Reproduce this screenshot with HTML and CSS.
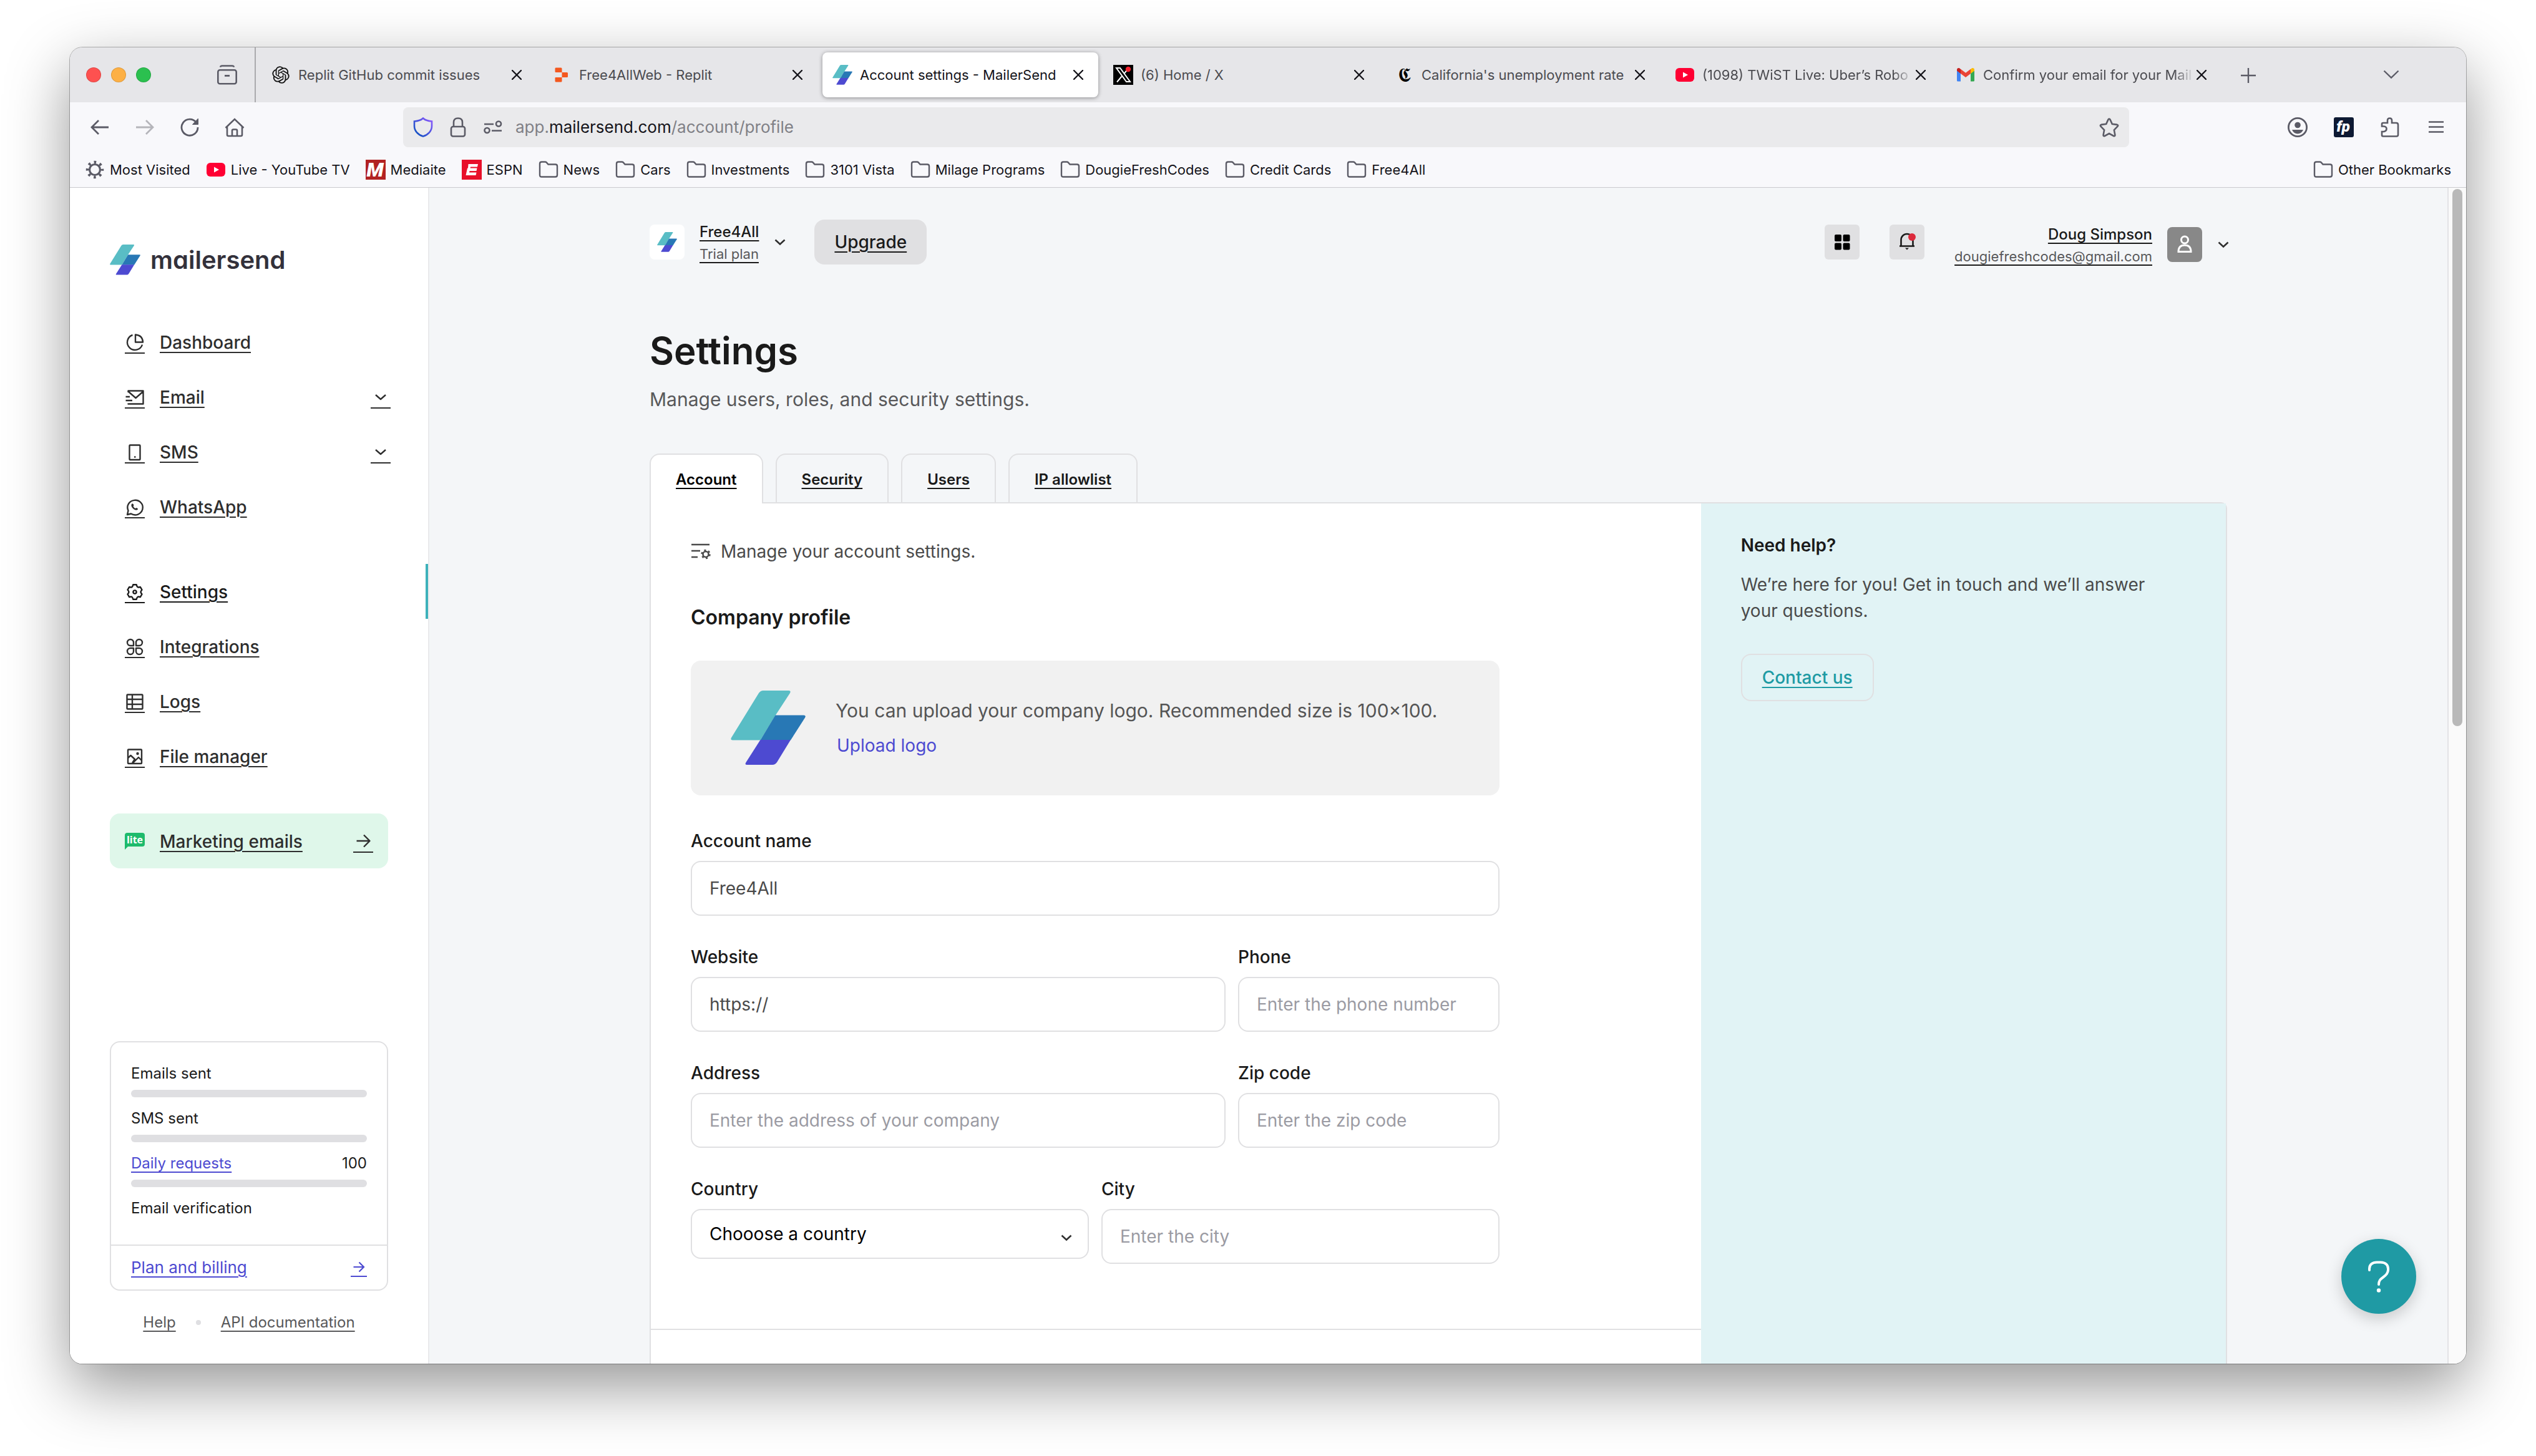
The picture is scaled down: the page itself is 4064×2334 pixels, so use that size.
FILE: index.html
```html
<!DOCTYPE html>
<html lang="en">
<head>
<meta charset="utf-8">
<title>Account settings - MailerSend</title>
<link rel="stylesheet" href="styles.css">
</head>
<body>
<svg class="sprite" aria-hidden="true">
  <symbol id="mark" viewBox="0 0 120 120">
    <path fill="#59bdc5" d="M52 0H93Q97 0 95 4L71.500 40L47.500 79.500H3Q-1 79.500 1 75.500L45 4Q48 0 52 0Z"/>
    <path fill="#2878b5" d="M71.500 39.500H117Q121 39.500 119 43.500L96 79.500H47.500Z"/>
    <path fill="#4d4ad1" d="M47.500 79H96L74 115Q71 119 67 119H26Q22 119 24.500 115Z"/>
  </symbol>
  <symbol id="close" viewBox="0 0 16 16"><path d="M1 1L15 15M15 1L1 15" fill="none" stroke="#15141a" stroke-width="2.400" stroke-linecap="round"/></symbol>
  <symbol id="folder" viewBox="0 0 32 32"><path d="M2 6.500Q2 3.500 5 3.500H10.500Q12 3.500 13 4.600L15.500 7.500H27Q30 7.500 30 10.500V24.500Q30 27.500 27 27.500H5Q2 27.500 2 24.500Z" fill="none" stroke="#5b5b66" stroke-width="2.400"/></symbol>
  <symbol id="youtube" viewBox="0 0 32 32"><rect x="1" y="5" width="30" height="22" rx="6" fill="#ff0033"/><path d="M13 11.500L21 16L13 20.500Z" fill="#fff"/></symbol>
  <symbol id="chevron" viewBox="0 0 20 20"><path d="M2.500 6.500L10 13.500L17.500 6.500" fill="none" stroke="currentColor" stroke-width="2.600"/></symbol>
</svg>

<div class="window">
  <header class="tabbar">
    <div class="lights"><span class="light red"></span><span class="light amber"></span><span class="light green"></span></div>
    <button class="iconbtn recent" aria-label="Recent browsing"><svg viewBox="0 0 32 32" class="i32"><path d="M5 3.500Q5.500 1.500 8 1.500H24Q26.500 1.500 27 3.500" fill="none" stroke="#5b5b66" stroke-width="2.600"/><rect x="1.300" y="8.300" width="29.400" height="22" rx="3" fill="none" stroke="#5b5b66" stroke-width="2.600"/><rect x="12" y="16" width="8" height="2.800" fill="#5b5b66"/></svg></button>
    <div class="tabs">
      <div class="tab"><svg class="i32" viewBox="-2 -2 28 28"><path d="M22.2819 9.8211a5.9847 5.9847 0 0 0-.5157-4.9108 6.0462 6.0462 0 0 0-6.5098-2.9A6.0651 6.0651 0 0 0 4.9807 4.1818a5.9847 5.9847 0 0 0-3.9977 2.9 6.0462 6.0462 0 0 0 .7427 7.0966 5.98 5.98 0 0 0 .511 4.9107 6.051 6.051 0 0 0 6.5146 2.9001A5.9847 5.9847 0 0 0 13.2599 24a6.0557 6.0557 0 0 0 5.7718-4.2058 5.9894 5.9894 0 0 0 3.9977-2.9001 6.0557 6.0557 0 0 0-.7475-7.0729zm-9.022 12.6081a4.4755 4.4755 0 0 1-2.8764-1.0408l.1419-.0804 4.7783-2.7582a.7948.7948 0 0 0 .3927-.6813v-6.7369l2.02 1.1686a.071.071 0 0 1 .038.052v5.5826a4.504 4.504 0 0 1-4.4945 4.4944zm-9.6607-4.1254a4.4708 4.4708 0 0 1-.5346-3.0137l.142.0852 4.783 2.7582a.7712.7712 0 0 0 .7806 0l5.8428-3.3685v2.3324a.0804.0804 0 0 1-.0332.0615L9.74 19.9502a4.4992 4.4992 0 0 1-6.1408-1.6464zM2.3408 7.8956a4.485 4.485 0 0 1 2.3655-1.9728V11.6a.7664.7664 0 0 0 .3879.6765l5.8144 3.3543-2.0201 1.1685a.0757.0757 0 0 1-.071 0l-4.8303-2.7865A4.504 4.504 0 0 1 2.3408 7.872zm16.5963 3.8558L13.1038 8.364 15.1192 7.2a.0757.0757 0 0 1 .071 0l4.8303 2.7913a4.4944 4.4944 0 0 1-.6765 8.1042v-5.6772a.79.79 0 0 0-.407-.667zm2.0107-3.0231l-.142-.0852-4.7735-2.7818a.7759.7759 0 0 0-.7854 0L9.409 9.2297V6.8974a.0662.0662 0 0 1 .0284-.0615l4.8303-2.7866a4.4992 4.4992 0 0 1 6.6802 4.66zM8.3065 12.863l-2.02-1.1638a.0804.0804 0 0 1-.038-.0567V6.0742a4.4992 4.4992 0 0 1 7.3757-3.4537l-.142.0805L8.704 5.459a.7948.7948 0 0 0-.3927.6813zm1.0976-2.3654l2.602-1.4998 2.6069 1.4998v2.9994l-2.5974 1.4997-2.6067-1.4997Z" fill="#111"/></svg><span class="tab-label">Replit GitHub commit issues</span><button class="iconbtn" aria-label="Close tab"><svg class="i16"><use href="#close"/></svg></button></div>
      <div class="tab"><svg class="i32" viewBox="0 0 32 32"><g fill="#f4581f"><path d="M6.500 4.500H15Q16.500 4.500 16.500 6V12H6.500Q5.500 12 5.500 10.500V6Q5.500 4.500 6.500 4.500Z"/><path d="M16.500 12H24.500Q26 12 26 13.500V18.500Q26 20 24.500 20H16.500Z"/><path d="M6.500 20H16.500V26Q16.500 27.500 15 27.500H7Q5.500 27.500 5.500 26V21Q5.500 20 6.500 20Z"/></g></svg><span class="tab-label">Free4AllWeb - Replit</span><button class="iconbtn" aria-label="Close tab"><svg class="i16"><use href="#close"/></svg></button></div>
      <div class="tab active"><svg class="i32"><use href="#mark"/></svg><span class="tab-label">Account settings - MailerSend</span><button class="iconbtn" aria-label="Close tab"><svg class="i16"><use href="#close"/></svg></button></div>
      <div class="tab"><svg class="i32" viewBox="0 0 32 32"><rect width="32" height="32" fill="#000"/><path d="M5 5H11L27 27H21Z" fill="none" stroke="#fff" stroke-width="2"/><path d="M25 5L17.500 13.800M13.500 18.500L6 27.500" stroke="#fff" stroke-width="2"/><circle cx="24" cy="7" r="4.200" fill="#f4212e"/></svg><span class="tab-label">(6) Home / X</span><button class="iconbtn" aria-label="Close tab"><svg class="i16"><use href="#close"/></svg></button></div>
      <div class="tab"><svg class="i32" viewBox="0 0 32 32"><text x="16" y="27" text-anchor="middle" class="gothic">𝕮</text></svg><span class="tab-label">California's unemployment rate</span><button class="iconbtn" aria-label="Close tab"><svg class="i16"><use href="#close"/></svg></button></div>
      <div class="tab"><svg class="i32"><use href="#youtube"/></svg><span class="tab-label fade">(1098) TWiST Live: Uber’s Robo</span><button class="iconbtn" aria-label="Close tab"><svg class="i16"><use href="#close"/></svg></button></div>
      <div class="tab"><svg class="i32" viewBox="0 0 32 32"><path d="M2 9V25Q2 26.500 3.500 26.500H8V13Z" fill="#4285f4"/><path d="M24 13V26.500H28.500Q30 26.500 30 25V9Z" fill="#34a853"/><path d="M24 7V14L30 9.500V8Q30 5 27 5Q26 5 25 6Z" fill="#fbbc04"/><path d="M8 14L2 9.500V8Q2 5 5 5Q6 5 7 6L8 7Z" fill="#c5221f"/><path d="M8 14V6.800L16 12.800L24 6.800V14L16 20Z" fill="#ea4335"/></svg><span class="tab-label fade">Confirm your email for your Mail</span><button class="iconbtn" aria-label="Close tab"><svg class="i16"><use href="#close"/></svg></button></div>
    </div>
    <button class="iconbtn newtab" aria-label="New tab"><svg class="i32" viewBox="0 0 32 32"><path d="M16 5V29M4 17H28" stroke="#5b5b66" stroke-width="2.400"/></svg></button>
    <button class="iconbtn alltabs" aria-label="List all tabs"><svg class="i32" viewBox="0 0 32 32"><path d="M4.500 9.500L16 20.500L27.500 9.500" fill="none" stroke="#5b5b66" stroke-width="2.400"/></svg></button>
  </header>

  <div class="toolbar">
    <div class="navbtns">
      <button class="iconbtn" aria-label="Back"><svg class="i32" viewBox="0 0 32 32"><path d="M30 16H3.500M14 5L3 16L14 27" fill="none" stroke="#5b5b66" stroke-width="2.800"/></svg></button>
      <button class="iconbtn" aria-label="Forward"><svg class="i32" viewBox="0 0 32 32"><path d="M2 16H28.500M18 5L29 16L18 27" fill="none" stroke="#b5b5ba" stroke-width="2.800"/></svg></button>
      <button class="iconbtn" aria-label="Reload"><svg class="i32" viewBox="0 0 32 32"><path d="M26.500 8.500A13 13 0 1 0 29 16" fill="none" stroke="#5b5b66" stroke-width="2.800"/><path d="M29.500 2V11.500H20.500Z" fill="#5b5b66" stroke="#5b5b66" stroke-linejoin="round"/></svg></button>
      <button class="iconbtn" aria-label="Home"><svg class="i32" viewBox="0 0 32 32"><path d="M1.500 17L16 3L30.500 17M4 15V28Q4 30 6 30H26Q28 30 28 28V15M12 30V21.500Q12 19.500 14 19.500H18Q20 19.500 20 21.500V30" fill="none" stroke="#5b5b66" stroke-width="2.600"/></svg></button>
    </div>
    <div class="urlbar">
      <svg class="i32" viewBox="0 0 32 32"><path d="M16 1.500C19 4.500 24 6 30 6.500V14C30 22 24 28 16 30.500C8 28 2 22 2 14V6.500C8 6 13 4.500 16 1.500Z" fill="none" stroke="url(#sh)" stroke-width="2.600"/><defs><linearGradient id="sh" x1="1" y1="0" x2="0" y2="1"><stop offset="0" stop-color="#9059ff"/><stop offset="1" stop-color="#0250bb"/></linearGradient></defs></svg>
      <svg class="i32" viewBox="0 0 32 32"><rect x="5" y="15" width="22" height="15.500" rx="3" fill="none" stroke="#5b5b66" stroke-width="2.600"/><path d="M9 15V8Q9 1.500 16 1.500T23 8V15" fill="none" stroke="#5b5b66" stroke-width="2.600"/></svg>
      <svg class="i32" viewBox="0 0 32 32"><path d="M2 11H17M14 21.500H30" stroke="#5b5b66" stroke-width="2.600"/><circle cx="25" cy="10.500" r="4" fill="none" stroke="#5b5b66" stroke-width="2.600"/><circle cx="6.500" cy="21" r="4" fill="none" stroke="#5b5b66" stroke-width="2.600"/></svg>
      <span class="url">app.<b>mailersend.com</b>/account/profile</span>
      <button class="iconbtn" aria-label="Bookmark this page"><svg class="i32" viewBox="0 0 32 32"><path d="M16 2.500Q17 2.500 17.500 3.600L20.800 10.800L28.800 11.900Q31 12.500 29.600 14.500L23.900 20.400L25.400 28.400Q25.400 30.700 23.200 30L16 26L8.800 30Q6.600 30.700 6.600 28.400L8.100 20.400L2.400 14.500Q1 12.500 3.200 11.900L11.200 10.800L14.500 3.600Q15 2.500 16 2.500Z" fill="none" stroke="#5b5b66" stroke-width="2.600"/></svg></button>
    </div>
    <div class="actions">
      <button class="iconbtn" aria-label="Account"><svg class="i32" viewBox="0 0 32 32"><circle cx="16" cy="16" r="14.600" fill="none" stroke="#5b5b66" stroke-width="2.800"/><circle cx="16" cy="12.500" r="4.800" fill="#5b5b66"/><path d="M7 20H25Q22 26.500 16 26.500T7 20Z" fill="#5b5b66"/></svg></button>
      <button class="iconbtn" aria-label="Extension"><svg class="i32" viewBox="0 0 32 32"><rect width="32" height="32" rx="3" fill="#0e1a33"/><text x="15" y="23" text-anchor="middle" class="fp">fp</text></svg></button>
      <button class="iconbtn" aria-label="Extensions"><svg class="i32" viewBox="0 0 32 32"><path d="M5 30.500Q3 30.500 3 28.500V23H6Q10.500 22 10.500 18.500T6 14.500H3V11Q3 9 5 9H12V5Q12 1.500 15.500 1.500T19 5V9H26Q29 9 29 12V28Q29 30.500 26.500 30.500Z" fill="none" stroke="#5b5b66" stroke-width="2.600"/></svg></button>
      <button class="iconbtn" aria-label="Menu"><svg class="i32" viewBox="0 0 32 32"><path d="M4 7.500H28M4 15.500H28M4 23.500H28" stroke="#5b5b66" stroke-width="2.600"/></svg></button>
    </div>
  </div>

  <nav class="bookmarks" aria-label="Bookmarks">
    <a href="#"><svg class="i32" viewBox="0 0 32 32"><circle cx="16" cy="16" r="8.500" fill="none" stroke="#5b5b66" stroke-width="3.200"/><circle cx="16" cy="16" r="12" fill="none" stroke="#5b5b66" stroke-width="4.500" stroke-dasharray="3.600 5.825" stroke-dashoffset="1.800"/></svg>Most Visited</a>
    <a href="#"><svg class="i32"><use href="#youtube"/></svg>Live - YouTube TV</a>
    <a href="#"><svg class="i32" viewBox="0 0 32 32"><rect width="32" height="32" fill="#b22222"/><text x="15" y="27" text-anchor="middle" class="fav-m">M</text></svg>Mediaite</a>
    <a href="#"><svg class="i32" viewBox="0 0 32 32"><rect width="32" height="32" fill="#e8102a"/><path d="M10.500 7H26L25 11.500H14L13.500 13.500H24.500L23.500 18H12.500L12 20.500H23.500L22.500 25H6.500L9 13.500H10Z" fill="#fff"/></svg>ESPN</a>
    <a href="#"><svg class="i32"><use href="#folder"/></svg>News</a>
    <a href="#"><svg class="i32"><use href="#folder"/></svg>Cars</a>
    <a href="#"><svg class="i32"><use href="#folder"/></svg>Investments</a>
    <a href="#"><svg class="i32"><use href="#folder"/></svg>3101 Vista</a>
    <a href="#"><svg class="i32"><use href="#folder"/></svg>Milage Programs</a>
    <a href="#"><svg class="i32"><use href="#folder"/></svg>DougieFreshCodes</a>
    <a href="#"><svg class="i32"><use href="#folder"/></svg>Credit Cards</a>
    <a href="#"><svg class="i32"><use href="#folder"/></svg>Free4All</a>
    <a href="#" class="other"><svg class="i32"><use href="#folder"/></svg>Other Bookmarks</a>
  </nav>

  <div class="page">
    <aside class="sidebar">
      <a href="#" class="brand"><svg class="brand-mark"><use href="#mark"/></svg>mailersend</a>
      <nav class="menu" aria-label="Main">
        <div class="menu-group">
          <a href="#" class="item"><svg class="glyph" viewBox="0 -4 32 36"><path d="M12.500 4A12.300 12.300 0 1 0 28 19.500M17 3.500V15.500H29Q28.500 4.500 17 3.500Z"/></svg><span>Dashboard</span></a>
          <a href="#" class="item"><svg class="glyph" viewBox="0 -4 32 36"><path d="M5.500 8V5.500H29.500V26.500H5.500V25.500M5.500 6.500L17.500 17L29.500 6.500M1.500 15H8M1.500 21H12"/></svg><span>Email</span><svg class="glyph end" viewBox="0 -4 32 36"><path d="M8 12L16 19L24 12"/></svg></a>
          <a href="#" class="item"><svg class="glyph" viewBox="0 -4 32 36"><rect x="7.500" y="4.500" width="17" height="23.500" rx="1"/><path d="M15 23.500H17.500"/></svg><span>SMS</span><svg class="glyph end" viewBox="0 -4 32 36"><path d="M8 12L16 19L24 12"/></svg></a>
          <a href="#" class="item"><svg class="glyph" viewBox="0 -4 32 36"><path d="M4 28L5.500 21.500A12.200 11.800 0 1 1 10 26.500Z"/><path d="M11.500 10.500C9.500 12.500 10.500 15.500 13 18S18.500 21.500 20.500 20Q21.500 19 20.500 18L18.500 17L17 18Q14.500 17 13.500 14.500L14.500 13L13.500 11Q12.500 10 11.500 10.500Z" class="solid"/></svg><span>WhatsApp</span></a>
        </div>
        <div class="menu-group">
          <a href="#" class="item current"><svg class="glyph" viewBox="0 -4 32 36"><path d="M13.300 4.300H18.700Q19.500 7.800 20.700 8.200Q22 8.800 24.800 7.900L27.500 12.500Q25.500 14.700 25.500 16T27.500 19.500L24.800 24.100Q22 23.200 20.700 23.800Q19.500 24.500 18.700 27.700H13.300Q12.500 24.500 11.300 23.800Q10 23.200 7.200 24.100L4.500 19.500Q6.500 17.300 6.500 16T4.500 12.500L7.200 7.900Q10 8.800 11.300 8.200Q12.500 7.800 13.300 4.300Z"/><circle cx="16" cy="16" r="2.600"/></svg><span>Settings</span></a>
          <a href="#" class="item"><svg class="glyph" viewBox="0 -4 32 36"><path d="M14 14V9A5 5 0 1 0 9 14ZM18 14V9A5 5 0 1 1 23 14ZM14 18V23A5 5 0 1 1 9 18ZM18 18V23A5 5 0 1 0 23 18Z"/></svg><span>Integrations</span></a>
          <a href="#" class="item"><svg class="glyph" viewBox="0 -4 32 36"><rect x="3.500" y="4.500" width="25" height="23" rx="1"/><path d="M3.500 12H28.500M3.500 20H28.500M12 4.500V27.500"/></svg><span>Logs</span></a>
          <a href="#" class="item"><svg class="glyph" viewBox="0 -4 32 36"><rect x="5" y="4.500" width="22" height="22.500" rx="1"/><path d="M5 18L9.500 14L16 20L12 26M13 26L22 17L27 22"/><circle cx="20.500" cy="11" r="1" /></svg><span>File manager</span></a>
        </div>
        <a href="#" class="item promo"><svg class="lite" viewBox="0 0 32 32"><path d="M4 3H28Q32 3 32 7V21Q32 25 28 25H5L0 30V7Q0 3 4 3Z" fill="#1dbb6c"/><text x="16" y="20" text-anchor="middle" class="lite-text">lite</text></svg><span>Marketing emails</span><svg class="glyph end" viewBox="0 -4 32 36"><path d="M5.500 15H26.500M17 5.500L26.500 15L17 24.500"/></svg></a>
      </nav>
      <section class="usage">
        <div class="usage-list">
          <div class="usage-row"><span>Emails sent</span></div><div class="bar"></div>
          <div class="usage-row"><span>SMS sent</span></div><div class="bar"></div>
          <div class="usage-row"><a href="#">Daily requests</a><span>100</span></div><div class="bar"></div>
          <div class="usage-row"><span>Email verification</span></div>
        </div>
        <a href="#" class="plan"><span>Plan and billing</span><svg class="plan-arrow" viewBox="0 0 26 28"><path d="M4.500 14H20.500M13.500 6.500L21 14L13.500 21.500"/></svg></a>
      </section>
      <div class="foot"><a href="#">Help</a><span class="dot"></span><a href="#">API documentation</a></div>
    </aside>

    <main class="main">
      <div class="container">
        <header class="top">
          <div class="logo-tile"><svg class="i32"><use href="#mark"/></svg></div>
          <a href="#" class="account"><span class="name">Free4All</span><span class="sub">Trial plan</span></a>
          <svg class="chev"><use href="#chevron"/></svg>
          <a href="#" class="upgrade">Upgrade</a>
          <div class="top-right">
            <button class="square" aria-label="Apps"><svg class="i32" viewBox="0 0 32 32"><g fill="#000"><rect x="4" y="4" width="11" height="11" rx="2"/><rect x="17.500" y="4" width="11" height="11" rx="2"/><rect x="4" y="17.500" width="11" height="11" rx="2"/><rect x="17.500" y="17.500" width="11" height="11" rx="2"/></g></svg></button>
            <button class="square" aria-label="Notifications"><svg class="i32" viewBox="0 0 32 32"><path d="M6.500 22.500V12.500A9.500 9.500 0 0 1 25.500 12.500V22.500M4 22.500H28" fill="none" stroke="#1a1a1a" stroke-width="2.600"/><path d="M13 25.500H19L16 28.500Z" fill="#1a1a1a"/><circle cx="24" cy="8" r="6" fill="#dc2a3c"/></svg></button>
            <a href="#" class="user"><span class="who"><span class="name">Doug Simpson</span><span class="sub">dougiefreshcodes@gmail.com</span></span><span class="avatar"><svg class="i32" viewBox="0 0 32 32"><g fill="none" stroke="#fff" stroke-width="3"><circle cx="16" cy="8.500" r="5.500"/><path d="M6 27.500Q6 17 16 17T26 27.500Z"/></g></svg></span><svg class="chev"><use href="#chevron"/></svg></a>
          </div>
        </header>

        <h1>Settings</h1>
        <p class="lead">Manage users, roles, and security settings.</p>

        <nav class="section-tabs" aria-label="Settings sections">
          <a href="#" class="on">Account</a><a href="#">Security</a><a href="#">Users</a><a href="#">IP allowlist</a>
        </nav>

        <div class="panel">
          <div class="panel-main">
            <form class="profile">
              <p class="intro"><svg class="i32" viewBox="0 0 32 32"><g fill="none" stroke="#4a4a4a" stroke-width="2.600"><path d="M1 5H30M1 15H15M1 25H11"/><circle cx="24" cy="20.500" r="4.500"/></g><circle cx="24" cy="20.500" r="6.500" fill="none" stroke="#4a4a4a" stroke-width="2.500" stroke-dasharray="3 3.800"/></svg>Manage your account settings.</p>
              <h2>Company profile</h2>
              <div class="upload">
                <svg class="upload-mark"><use href="#mark"/></svg>
                <div><p>You can upload your company logo. Recommended size is 100×100.</p><button type="button">Upload logo</button></div>
              </div>
              <div class="row"><div class="field"><label for="name">Account name</label><input id="name" type="text" value="Free4All"></div></div>
              <div class="row wide-narrow">
                <div class="field"><label for="site">Website</label><input id="site" type="text" value="https://"></div>
                <div class="field"><label for="phone">Phone</label><input id="phone" type="text" placeholder="Enter the phone number"></div>
              </div>
              <div class="row wide-narrow">
                <div class="field"><label for="addr">Address</label><input id="addr" type="text" placeholder="Enter the address of your company"></div>
                <div class="field"><label for="zip">Zip code</label><input id="zip" type="text" placeholder="Enter the zip code"></div>
              </div>
              <div class="row halves">
                <div class="field"><label for="country">Country</label><div class="select"><select id="country"><option>Chooose a country</option></select><svg class="chev"><use href="#chevron"/></svg></div></div>
                <div class="field"><label for="city">City</label><input id="city" type="text" placeholder="Enter the city"></div>
              </div>
            </form>
          </div>
          <aside class="help">
            <h3>Need help?</h3>
            <p>We’re here for you! Get in touch and we’ll answer your questions.</p>
            <a href="#" class="contact">Contact us</a>
          </aside>
        </div>
      </div>
    </main>
    <div class="scrollbar"><div class="thumb"></div></div>
    <button class="fab" aria-label="Open help"><svg viewBox="0 0 120 120"><path d="M45 50V48C45 41 50 37.500 57 37.500H63C71 37.500 75 42 75 48V49.500C75 55 72 58 67 61.500C62 65 60 67.500 60 73" fill="none" stroke="#fff" stroke-width="4" stroke-linecap="round"/><circle cx="60" cy="82.500" r="3.200" fill="#fff"/></svg></button>
  </div>
</div>
</body>
</html>
```
FILE: styles.css
```css
* { box-sizing: border-box; margin: 0; padding: 0; }
html, body { height: 100%; }
body {
  display: flex;
  padding: 76px 112px 148px;
  background: #fff;
  color: #1a1a1a;
  font-family: Inter, "Liberation Sans", sans-serif;
  font-size: 28px;
}
a { color: inherit; text-decoration-thickness: 2px; text-underline-offset: 5px; }
button, input, select { font: inherit; color: inherit; }
button { border: 0; background: none; }
svg { display: block; flex: none; }
.sprite { position: absolute; width: 0; height: 0; }
.i32 { width: 32px; height: 32px; }
.i16 { width: 16px; height: 16px; }
.iconbtn { display: block; flex: none; }

.window {
  flex: 1;
  min-width: 0;
  display: flex;
  flex-direction: column;
  overflow: hidden;
  border-radius: 20px;
  background: #f8f8fb;
  box-shadow: 0 0 0 1px rgba(0, 0, 0, .28), 0 36px 100px rgba(0, 0, 0, .42);
}

/* tab strip */
.tabbar { display: flex; align-items: center; height: 88px; padding: 0 104px 0 26px; background: #e6e6e9; flex: none; }
.lights { display: flex; gap: 16px; }
.light { width: 24px; height: 24px; border-radius: 50%; border: 1px solid rgba(0, 0, 0, .12); }
.red { background: #fe5150; }
.amber { background: #fdb045; }
.green { background: #2bc04f; }
.recent { margin: 0 28px 0 106px; }
.tabs { flex: 0 1 auto; display: flex; gap: 8px; min-width: 0; height: 88px; align-items: center; padding-left: 8px; border-left: 2px solid #aaaaad; }
.tab { flex: 0 1 442px; width: 442px; min-width: 0; height: 72px; display: flex; align-items: center; padding: 0 24px 0 16px; border-radius: 8px; color: #4b4b50; font-size: 22px; line-height: 32px; }
.tab.active { background: #fff; color: #15141a; box-shadow: 0 1px 6px rgba(0, 0, 0, .4); }
.tab-label { flex: 1; min-width: 0; margin: 0 4px 0 12px; overflow: hidden; white-space: nowrap; }
.fade { mask-image: linear-gradient(to left, transparent, #000 32px); }
.newtab { margin-left: 27px; }
.alltabs { margin-left: auto; }
.gothic { font: 32px "DejaVu Sans", serif; fill: #000; }
.fp { font: italic 900 24px Roboto, sans-serif; fill: #fff; }
.fav-m { font: italic 900 32px Roboto, sans-serif; fill: #fff; }

/* toolbar */
.toolbar { display: flex; align-items: center; height: 80px; padding: 0 32px; flex: none; }
.navbtns { display: flex; gap: 40px; }
.urlbar { flex: 1; display: flex; align-items: center; gap: 24px; height: 64px; margin: 0 254px; padding: 0 16px; border-radius: 8px; background: #eaeaec; }
.url { flex: 1; margin-left: -4px; font-size: 26px; color: #808086; line-height: 36px; }
.url b { font-weight: 400; color: #15141a; }
.actions { display: flex; gap: 42px; }
.bookmarks { display: flex; align-items: center; gap: 25px; height: 57px; padding: 0 24px; border-bottom: 1px solid #cacace; font-size: 22px; line-height: 32px; color: #15141a; flex: none; }
.bookmarks a { display: flex; align-items: center; gap: 8px; text-decoration: none; white-space: nowrap; }
.other { margin-left: auto; }

/* page */
.page { position: relative; flex: 1; min-height: 0; display: flex; background: #f4f6f8; overflow: hidden; }
.sidebar { width: 576px; flex: none; display: flex; flex-direction: column; padding: 90px 0 48px 64px; background: #fff; border-right: 2px solid #e9e9ec; }
.brand { display: flex; align-items: center; gap: 16px; height: 50px; font-size: 40px; font-weight: 600; font-feature-settings: "cv11"; color: #33313b; text-decoration: none; }
.brand-mark { width: 49px; height: 49px; }
.menu { display: flex; flex-direction: column; gap: 48px; margin-top: 63px; }
.item { display: flex; align-items: center; gap: 24px; height: 88px; padding: 0 60px 0 24px; color: #2e2e2e; font-weight: 500; line-height: 40px; }
.item span { padding-top: 2px; }
.item.current { color: #1a1a1a; border-right: 4px solid #3db1ba; }
.glyph { width: 32px; height: 38px; border-bottom: 2px solid currentColor; fill: none; stroke: currentColor; stroke-width: 2.4; stroke-linejoin: round; }
.glyph .solid { fill: currentColor; stroke: none; }
.end { margin-left: auto; }
.promo { margin-right: 64px; padding: 0 24px; border-radius: 16px; background: #dff7ea; }
.lite { width: 32px; height: 32px; }
.lite-text { font: 700 16px "Open Sans", sans-serif; fill: #fff; }
.usage { margin: auto 64px 0 0; border: 2px solid #e0e0e2; border-radius: 16px; font-size: 24px; line-height: 36px; }
.usage-list { padding: 32px 32px 40px; }
.usage-row { display: flex; justify-content: space-between; }
.usage a { color: #4d4ad1; }
.bar { height: 12px; margin: 8px 0 16px; border-radius: 6px; background: #dfdfe2; }
.plan { display: flex; align-items: center; justify-content: space-between; height: 72px; padding: 0 32px; border-top: 2px solid #e0e0e2; font-size: 26px; }
.plan-arrow { width: 26px; height: 30px; border-bottom: 2px solid currentColor; fill: none; stroke: currentColor; stroke-width: 2.2; }
.foot { display: flex; align-items: center; justify-content: center; gap: 32px; margin: 33px 64px 0 0; font-size: 24px; line-height: 36px; color: #58585a; }
.dot { width: 8px; height: 8px; border-radius: 50%; background: #dfdfe2; }

.main { flex: 1; min-width: 0; overflow: hidden; display: flex; justify-content: center; padding-top: 51px; }
.container { width: 100%; max-width: 2528px; display: flex; flex-direction: column; }
.top { display: flex; align-items: center; height: 72px; margin-right: -4px; flex: none; }
.logo-tile { display: flex; align-items: center; justify-content: center; width: 56px; height: 56px; border-radius: 8px; background: #fff; }
.account { display: flex; flex-direction: column; margin: 0 24px; }
.name { font-size: 24px; font-weight: 500; line-height: 38px; }
.sub { font-size: 22px; line-height: 32px; color: #58585a; }
.account .sub, .account .name, .who .sub, .who .name { text-decoration: underline #1a1a1a 2px; }
.account, .user { text-decoration: none; }
.chev { width: 20px; height: 20px; color: #2e2e2e; }
.upgrade { display: flex; align-items: center; height: 72px; margin-left: 45px; padding: 0 32px; border-radius: 16px; background: #e0e0e2; font-weight: 500; }
.top-right { display: flex; align-items: center; gap: 48px; margin-left: auto; }
.square { display: flex; align-items: center; justify-content: center; width: 56px; height: 56px; border-radius: 6px; background: #e0e0e2; }
.user { display: flex; align-items: center; gap: 24px; padding-top: 8px; }
.who { display: flex; flex-direction: column; align-items: flex-end; }
.avatar { display: flex; align-items: center; justify-content: center; width: 56px; height: 56px; border-radius: 8px; background: #888; }

h1 { margin-top: 102px; font-size: 60px; font-weight: 600; line-height: 72px; }
.lead { margin-top: 20px; font-size: 30px; line-height: 44px; color: #58585a; }
.section-tabs { position: relative; display: flex; gap: 20px; margin: 65px 0 -2px; flex: none; }
.section-tabs a { display: flex; align-items: center; height: 80px; padding: 0 40px; border: 2px solid #e0e0e2; border-bottom: 0; border-radius: 16px 16px 0 0; font-size: 24px; font-weight: 600; }
.section-tabs .on { position: relative; z-index: 1; background: #fff; color: #000; }
.panel { flex: 1 0 auto; min-height: 1480px; display: grid; grid-template-columns: 2fr 1fr; border: 2px solid #e0e0e2; border-radius: 0 10px 0 0; background: #fff; }
.profile { padding: 55px 64px 104px; border-bottom: 2px solid #e0e0e2; }
.intro { display: flex; align-items: center; gap: 16px; line-height: 44px; color: #4a4a4a; }
h2 { margin-top: 60px; font-size: 32px; font-weight: 600; line-height: 48px; }
.upload { display: flex; align-items: center; gap: 48px; max-width: 1296px; height: 216px; margin: 45px 0 53px; padding: 0 64px; border-radius: 16px; background: #f1f1f1; }
.upload-mark { width: 120px; height: 120px; }
.upload p { margin-bottom: 12px; font-size: 30px; line-height: 44px; color: #555; }
.upload button { display: block; padding-left: 2px; line-height: 44px; color: #4d4ad1; }
.row { display: grid; gap: 20px; max-width: 1296px; }
.row + .row { margin-top: 46px; }
.wide-narrow { grid-template-columns: 857fr 419fr; }
.halves { grid-template-columns: 1fr 1fr; }
.field { display: flex; flex-direction: column; gap: 12px; min-width: 0; }
label { font-weight: 500; line-height: 40px; }
input, select { width: 100%; height: 88px; padding: 0 28px; border: 2px solid #e0e0e2; border-radius: 16px; background: #fff; color: #4a4a4a; outline: 0; }
input::placeholder { color: #9b9ba3; opacity: 1; }
.select { position: relative; }
select { height: 80px; appearance: none; color: #000; display: block; }
.select .chev { position: absolute; right: 26px; top: 36px; pointer-events: none; }
.help { padding: 47px 64px; background: #e1f3f5; line-height: 42px; }
.help h3 { font-size: 28px; font-weight: 600; line-height: 40px; }
.help p { margin: 22px 0 48px; color: #4a4a4a; }
.contact { display: inline-flex; align-items: center; height: 76px; padding: 0 32px; border: 2px solid #e0e0e2; border-radius: 16px; color: #1e9ba4; font-weight: 500; }

.scrollbar { width: 30px; flex: none; padding: 2px 0 0 6px; border-left: 2px solid #e3e3e6; background: #fafafa; }
.thumb { width: 16px; height: 861px; border-radius: 8px; background: #b9b9b9; }
.fab { position: absolute; right: 80px; bottom: 80px; width: 120px; height: 120px; border-radius: 50%; background: #1f9aa4; box-shadow: 0 8px 24px rgba(0, 0, 0, .18); }
```
